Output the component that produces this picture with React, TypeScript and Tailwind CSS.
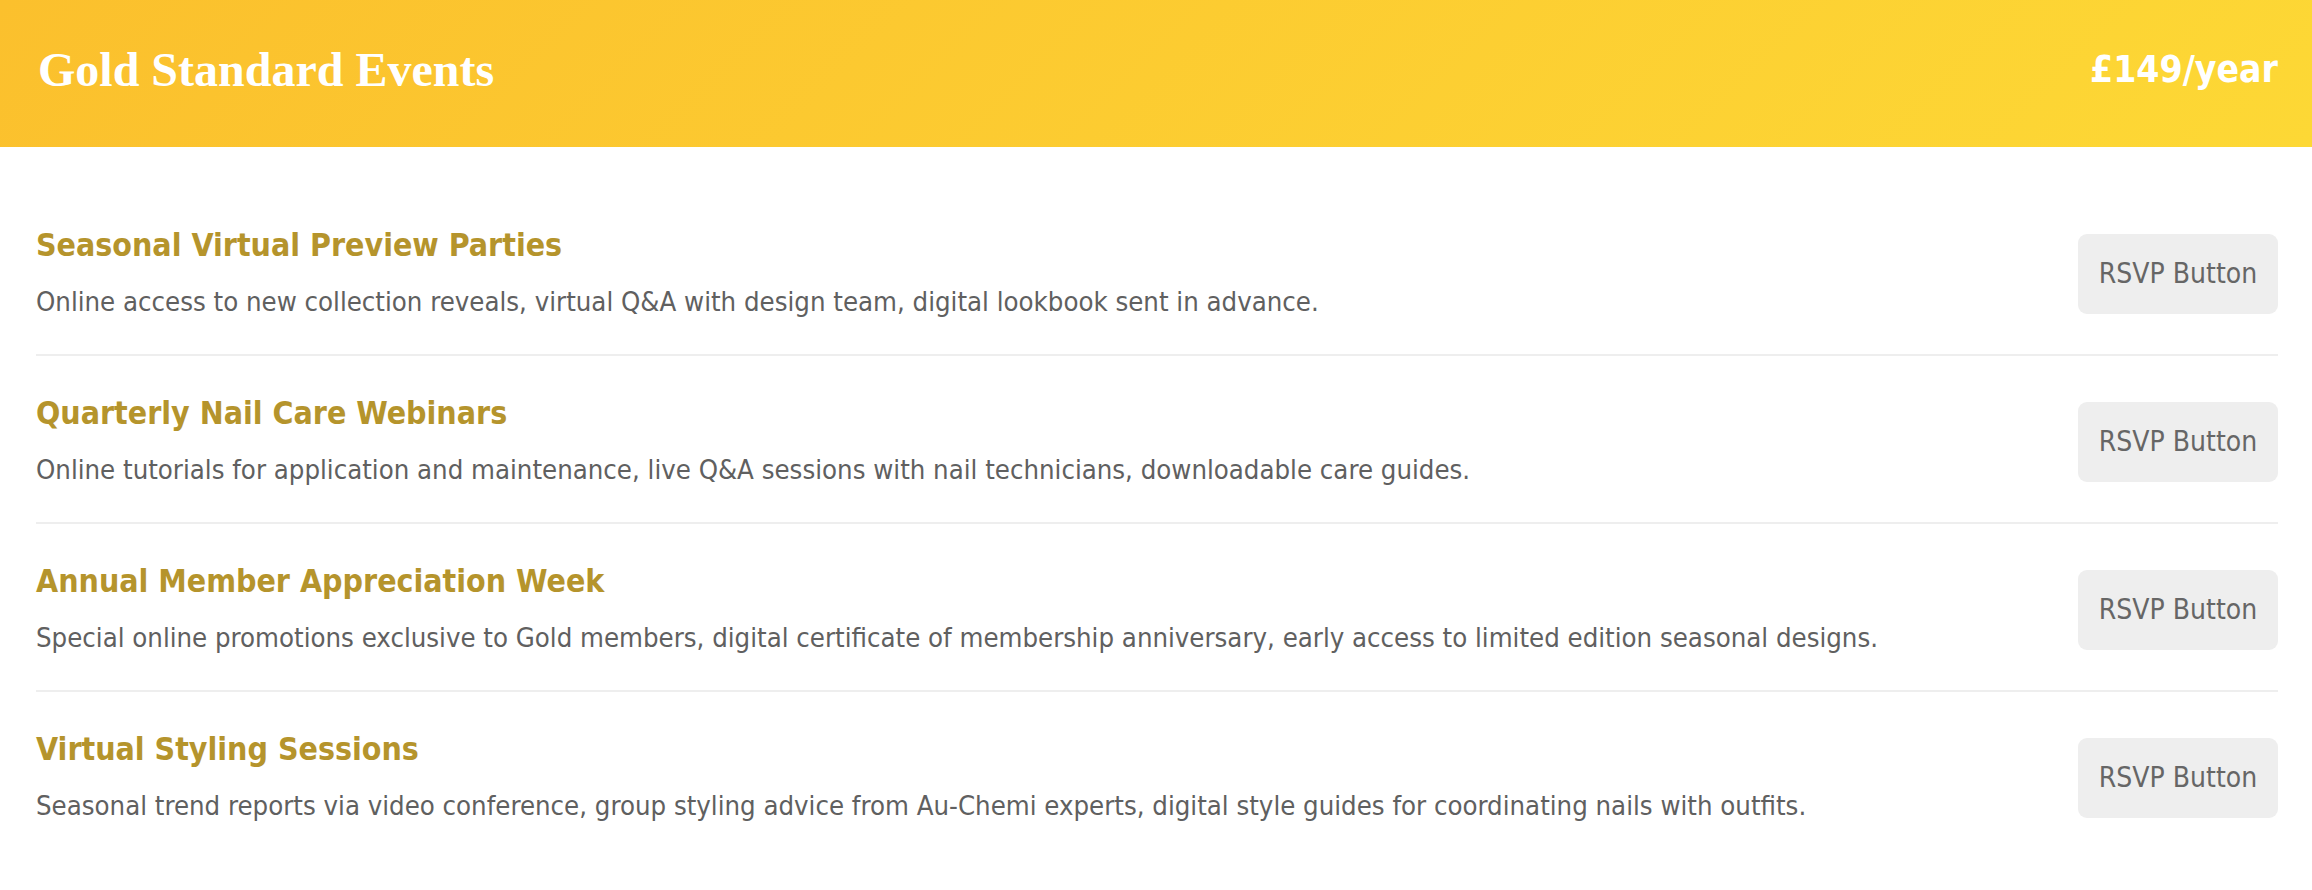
const events = [
  {
    title: "Seasonal Virtual Preview Parties",
    text: "Online access to new collection reveals, virtual Q&A with design team, digital lookbook sent in advance.",
  },
  {
    title: "Quarterly Nail Care Webinars",
    text: "Online tutorials for application and maintenance, live Q&A sessions with nail technicians, downloadable care guides.",
  },
  {
    title: "Annual Member Appreciation Week",
    text: "Special online promotions exclusive to Gold members, digital certificate of membership anniversary, early access to limited edition seasonal designs.",
  },
  {
    title: "Virtual Styling Sessions",
    text: "Seasonal trend reports via video conference, group styling advice from Au-Chemi experts, digital style guides for coordinating nails with outfits.",
  },
];

const sans = "font-['DejaVu_Sans_Condensed','DejaVu_Sans',sans-serif]";

export default function App() {
  return (
    <div className="min-h-[890px] bg-white">
      <header className="flex h-[147px] items-center justify-between bg-linear-135 from-[#fbc02d] to-[#fdd835] pb-[8px] pl-[38px] pr-[34px]">
        <h1 className="font-['Liberation_Serif',serif] text-[48px] font-bold leading-none text-white">
          Gold Standard Events
        </h1>
        <span className={`${sans} text-[37px] font-bold leading-none text-white`}>
          £149/year
        </span>
      </header>

      <ul className="pl-9 pr-[34px] pt-[41px]">
        {events.map((ev, i) => (
          <li
            key={ev.title}
            className={`flex items-center justify-between pb-[33px] pt-[39px] ${
              i < events.length - 1 ? "border-b-2 border-[#eeeeee]" : ""
            }`}
          >
            <div className={sans}>
              <h3 className="text-[31.8px] font-bold leading-[36px] text-[#b5942c]">
                {ev.title}
              </h3>
              <p className="mt-[20px] text-[27.3px] leading-[38px] text-[#606060]">
                {ev.text}
              </p>
            </div>
            <button
              className={`${sans} flex h-[80px] w-[200px] shrink-0 items-center justify-center rounded-[9px] bg-[#eeeeee] text-[28px] text-[#666666]`}
            >
              RSVP Button
            </button>
          </li>
        ))}
      </ul>
    </div>
  );
}
